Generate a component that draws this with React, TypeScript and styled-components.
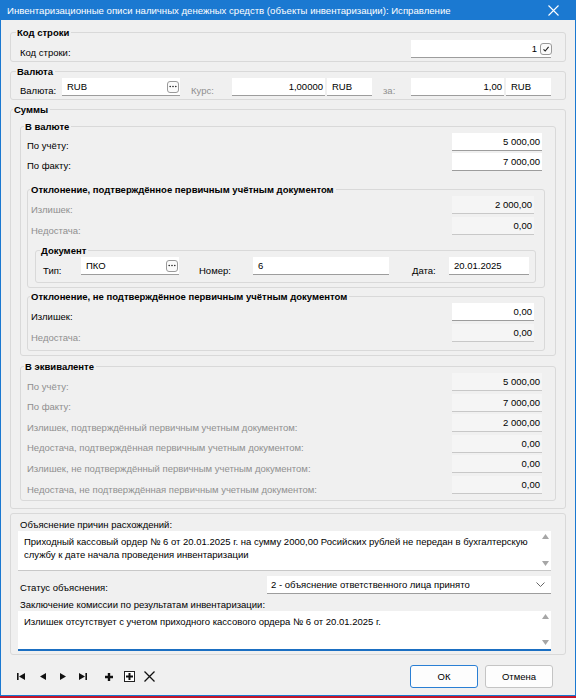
import React from 'react';
import styled, { createGlobalStyle } from 'styled-components';

const Global = createGlobalStyle`
  html, body { margin: 0; padding: 0; background: #ffffff; }
  body { font-family: "Liberation Sans", Arial, sans-serif; font-size: 9.5px; color: #000; }
  * { box-sizing: border-box; }
`;

const Frame = styled.div`
  width: 576px;
  height: 699px;
  display: flex;
  flex-direction: column;
`;

const Window = styled.div`
  width: 576px;
  height: 696px;
  display: flex;
  flex-direction: column;
  background: #f0f0f0;
  border-left: 1px solid #1b79d1;
  border-right: 1px solid #1b79d1;
  border-bottom: 1px solid #1b79d1;
`;

const RedEdge = styled.div`
  height: 2px;
  background: #c4162a;
`;

const TitleBar = styled.div`
  height: 20px;
  flex: none;
  background: #1b79d1;
  color: #fff;
  display: flex;
  align-items: center;
  justify-content: space-between;
  padding: 0 17px 0 7px;
  font-size: 9.6px;
  margin: 0 -1px;
`;

const Content = styled.div`
  padding: 6px 9px 0 9px;
  display: flex;
  flex-direction: column;
`;

const Group = styled.fieldset<{ $mt?: number; $ml?: number }>`
  margin: ${p => p.$mt ?? 0}px 0 0 ${p => p.$ml ?? 0}px;
  padding: 0;
  border: 1px solid #d9d9d9;
  border-radius: 3px;
  min-width: 0;
`;

const GroupBody = styled.div<{ $pad: string }>`
  padding: ${p => p.$pad};
  display: flex;
  flex-direction: column;
`;

const Legend = styled.legend<{ $lm?: number }>`
  font-weight: bold;
  padding: 0 2px 0 1px;
  margin-left: ${p => p.$lm ?? 1}px;
  line-height: 13px;
  font-size: 9.5px;
  color: #000;
`;

const Row = styled.div<{ $h?: number; $pr?: number; $mt?: number }>`
  display: flex;
  align-items: flex-start;
  height: ${p => p.$h ?? 21}px;
  padding-right: ${p => p.$pr ?? 0}px;
  margin-top: ${p => p.$mt ?? 0}px;
  flex: none;
`;

const Label = styled.span<{ $muted?: boolean; $w?: number; $ml?: number; $drop?: number }>`
  color: ${p => (p.$muted ? '#8f8f8f' : '#000')};
  ${p => (p.$w ? `width: ${p.$w}px;` : '')}
  margin-left: ${p => p.$ml ?? 0}px;
  margin-bottom: ${p => -(p.$drop ?? 0)}px;
  flex: none;
  align-self: flex-end;
  line-height: 14px;
  white-space: nowrap;
`;

const Caption = styled.div<{ $mt?: number }>`
  line-height: 13px;
  margin: ${p => p.$mt ?? 0}px 0 0 2px;
  white-space: nowrap;
`;

const Spacer = styled.div`
  flex: 1;
`;

const Field = styled.div<{ $w: number; $disabled?: boolean; $left?: boolean; $ml?: number }>`
  width: ${p => p.$w}px;
  height: 18px;
  flex: none;
  margin-left: ${p => p.$ml ?? 0}px;
  background: ${p => (p.$disabled ? '#f5f5f5' : '#ffffff')};
  border-bottom: 1px solid ${p => (p.$disabled ? '#c8c8c8' : '#9d9d9d')};
  display: flex;
  align-items: center;
  justify-content: ${p => (p.$left ? 'flex-start' : 'flex-end')};
  padding: ${p => (p.$left ? '0 4px 0 5px' : '0 2px 0 4px')};
  gap: 3px;
  line-height: 17px;
  white-space: nowrap;
  color: #000;
`;

const FieldText = styled.span`
  flex: 1;
`;

const MiniButton = styled.span`
  width: 12px;
  height: 12px;
  flex: none;
  border: 1px solid #9a9a9a;
  border-radius: 3px;
  background: #fbfbfb;
  display: flex;
  align-items: center;
  justify-content: center;
  margin-right: -3px;
`;

const TextBox = styled.div<{ $focused?: boolean }>`
  height: 40px;
  margin-right: 5px;
  background: #fff;
  border-bottom: ${p => (p.$focused ? '2px solid #1b6fc2' : '1px solid #c8c8c8')};
  display: flex;
  padding: 4px 0 0 6px;
`;

const TextLines = styled.div`
  flex: 1;
  line-height: 13px;
  overflow: hidden;
`;

const Line = styled.div`
  white-space: nowrap;
`;

const ScrollBar = styled.div`
  width: 12px;
  display: flex;
  flex-direction: column;
  justify-content: space-between;
  align-items: center;
  padding: 1px 0 4px 0;
  margin-top: -2px;
`;

const Select = styled.div`
  width: 284px;
  height: 18px;
  background: #fff;
  border-bottom: 1px solid #9d9d9d;
  display: flex;
  align-items: center;
  padding: 0 6px 0 4px;
  margin-right: 5px;
  justify-content: space-between;
`;

const Toolbar = styled.div`
  flex: 1;
  display: flex;
  align-items: center;
  padding: 4px 22px 0 16px;
`;

const NavIcons = styled.div`
  display: flex;
  align-items: center;
`;

const IconSlot = styled.span<{ $w: number }>`
  width: ${p => p.$w}px;
  display: flex;
  justify-content: flex-start;
  align-items: center;
`;

const Btn = styled.button<{ $primary?: boolean }>`
  width: 68px;
  height: 23px;
  margin-left: 7px;
  border: 1px solid ${p => (p.$primary ? '#2a7fd4' : '#c4c4c4')};
  border-radius: 3px;
  background: #fdfdfd;
  font-family: inherit;
  font-size: 9.5px;
  color: #000;
  padding: 0;
`;

const Dots = () => (
  <MiniButton>
    <svg width="8" height="3" viewBox="0 0 8 3">
      <circle cx="1.2" cy="1.5" r="0.8" fill="#222" />
      <circle cx="4" cy="1.5" r="0.8" fill="#222" />
      <circle cx="6.8" cy="1.5" r="0.8" fill="#222" />
    </svg>
  </MiniButton>
);

const Check = () => (
  <MiniButton>
    <svg width="8" height="8" viewBox="0 0 8 8">
      <path d="M1.5 4.3 L3.2 6 L6.6 1.8" fill="none" stroke="#222" strokeWidth="1.1" />
    </svg>
  </MiniButton>
);

const Up = () => (
  <svg width="7" height="5" viewBox="0 0 7 5"><path d="M0 5 L3.5 0 L7 5 Z" fill="#a6a6a6" /></svg>
);
const Down = () => (
  <svg width="7" height="5" viewBox="0 0 7 5"><path d="M0 0 L3.5 5 L7 0 Z" fill="#a6a6a6" /></svg>
);

const Scroll = () => (
  <ScrollBar>
    <Up />
    <Down />
  </ScrollBar>
);

type R = { label: string; value: string; muted?: boolean; disabled?: boolean };

const ValRow = ({ r, w, pr, h }: { r: R; w: number; pr: number; h?: number }) => (
  <Row $h={h} $pr={pr}>
    <Label $muted={r.muted}>{r.label}</Label>
    <Spacer />
    <Field $w={w} $disabled={r.disabled}>{r.value}</Field>
  </Row>
);

const equiv: R[] = [
  { label: 'По учёту:', value: '5 000,00' },
  { label: 'По факту:', value: '7 000,00' },
  { label: 'Излишек, подтверждённый первичным учетным документом:', value: '2 000,00' },
  { label: 'Недостача, подтверждённая первичным учетным документом:', value: '0,00' },
  { label: 'Излишек, не подтверждённый первичным учетным документом:', value: '0,00' },
  { label: 'Недостача, не подтверждённая первичным учетным документом:', value: '0,00' },
].map(r => ({ ...r, muted: true, disabled: true }));

export default function App() {
  return (
    <>
      <Global />
      <Frame>
        <Window>
          <TitleBar>
            <span>Инвентаризационные описи наличных денежных средств (объекты инвентаризации): Исправление</span>
            <svg width="11" height="11" viewBox="0 0 11 11">
              <path d="M0.5 0.5 L10.5 10.5 M10.5 0.5 L0.5 10.5" stroke="#fff" strokeWidth="1.1" />
            </svg>
          </TitleBar>
          <Content>
            <Group>
              <Legend $lm={5}>Код строки</Legend>
              <GroupBody $pad="1px 14px 3px 9px">
                <Row $h={18}>
                  <Label $drop={2}>Код строки:</Label>
                  <Spacer />
                  <Field $w={140}>
                    <span>1</span>
                    <Check />
                  </Field>
                </Row>
              </GroupBody>
            </Group>

            <Group $mt={3}>
              <Legend $lm={5}>Валюта</Legend>
              <GroupBody $pad="0 14px 3px 9px">
                <Row $h={18}>
                  <Label $w={42} $drop={2}>Валюта:</Label>
                  <Field $w={118} $left>
                    <FieldText>RUB</FieldText>
                    <Dots />
                  </Field>
                  <Label $muted $w={41} $ml={11} $drop={2}>Курс:</Label>
                  <Field $w={93}>1,00000</Field>
                  <Field $w={45} $left $ml={2}>RUB</Field>
                  <Label $muted $w={28} $ml={11} $drop={2}>за:</Label>
                  <Field $w={93}>1,00</Field>
                  <Field $w={45} $left $ml={2}>RUB</Field>
                </Row>
              </GroupBody>
            </Group>

            <Group $mt={3}>
              <Legend $lm={2}>Суммы</Legend>
              <GroupBody $pad="4px 9px 7px 9px">
                <Group>
                  <Legend $lm={3}>В валюте</Legend>
                  <GroupBody $pad="0 10px 4px 6px">
                    <ValRow r={{ label: 'По учёту:', value: '5 000,00' }} w={90} pr={3} h={20} />
                    <ValRow r={{ label: 'По факту:', value: '7 000,00' }} w={90} pr={3} h={20} />

                    <Group $mt={10}>
                      <Legend $lm={2}>Отклонение, подтверждённое первичным учётным документом</Legend>
                      <GroupBody $pad="0 8px 4px 3px">
                        <ValRow r={{ label: 'Излишек:', value: '2 000,00', muted: true, disabled: true }} w={82} pr={2} />
                        <ValRow r={{ label: 'Недостача:', value: '0,00', muted: true, disabled: true }} w={82} pr={2} />
                        <Group $mt={6} $ml={4}>
                          <Legend $lm={4}>Документ</Legend>
                          <GroupBody $pad="0 5px 4px 7px">
                            <Row $h={21}>
                              <Label $w={38}>Тип:</Label>
                              <Field $w={98} $left>
                                <FieldText>ПКО</FieldText>
                                <Dots />
                              </Field>
                              <Label $w={54} $ml={20}>Номер:</Label>
                              <Field $w={136} $left>6</Field>
                              <Label $w={37} $ml={23}>Дата:</Label>
                              <Field $w={80} $left>20.01.2025</Field>
                            </Row>
                          </GroupBody>
                        </Group>
                      </GroupBody>
                    </Group>

                    <Group $mt={2}>
                      <Legend $lm={2}>Отклонение, не подтверждённое первичным учётным документом</Legend>
                      <GroupBody $pad="0 8px 5px 3px">
                        <ValRow r={{ label: 'Излишек:', value: '0,00' }} w={82} pr={2} />
                        <ValRow r={{ label: 'Недостача:', value: '0,00', muted: true, disabled: true }} w={82} pr={2} />
                      </GroupBody>
                    </Group>
                  </GroupBody>
                </Group>

                <Group $mt={4}>
                  <Legend $lm={3}>В эквиваленте</Legend>
                  <GroupBody $pad="0 10px 3px 6px">
                    {equiv.map(r => (
                      <ValRow key={r.label} r={r} w={90} pr={3} h={20.6} />
                    ))}
                  </GroupBody>
                </Group>
              </GroupBody>
            </Group>

            <Group $mt={4}>
              <GroupBody $pad="4px 9px 3px 7px">
                <Caption>Объяснение причин расхождений:</Caption>
                <TextBox>
                  <TextLines>
                    <Line>Приходный кассовый ордер № 6 от 20.01.2025 г. на сумму 2000,00 Росийских рублей не передан в бухгалтерскую</Line>
                    <Line>службу к дате начала проведения инвентаризации</Line>
                  </TextLines>
                  <Scroll />
                </TextBox>
                <Row $h={19} $mt={5}>
                  <Label $ml={2}>Статус объяснения:</Label>
                  <Spacer />
                  <Select>
                    <span>2 - объяснение ответственного лица принято</span>
                    <svg width="9" height="5" viewBox="0 0 9 5">
                      <path d="M0.5 0.5 L4.5 4.5 L8.5 0.5" fill="none" stroke="#666" strokeWidth="1" />
                    </svg>
                  </Select>
                </Row>
                <Caption $mt={3}>Заключение комиссии по результатам инвентаризации:</Caption>
                <TextBox $focused>
                  <TextLines>
                    <Line>Излишек отсутствует с учетом приходного кассового ордера № 6 от 20.01.2025 г.</Line>
                  </TextLines>
                  <Scroll />
                </TextBox>
              </GroupBody>
            </Group>
          </Content>

          <Toolbar>
            <NavIcons>
              <IconSlot $w={23}>
                <svg width="8" height="7" viewBox="0 0 8 7"><path d="M0 0 H1.6 V7 H0 Z M8 0 L2 3.5 L8 7 Z" fill="#111" /></svg>
              </IconSlot>
              <IconSlot $w={20}>
                <svg width="6" height="7" viewBox="0 0 6 7"><path d="M6 0 L0 3.5 L6 7 Z" fill="#111" /></svg>
              </IconSlot>
              <IconSlot $w={19}>
                <svg width="6" height="7" viewBox="0 0 6 7"><path d="M0 0 L6 3.5 L0 7 Z" fill="#111" /></svg>
              </IconSlot>
              <IconSlot $w={26}>
                <svg width="8" height="7" viewBox="0 0 8 7"><path d="M0 0 L6 3.5 L0 7 Z M6.4 0 H8 V7 H6.4 Z" fill="#111" /></svg>
              </IconSlot>
              <IconSlot $w={19}>
                <svg width="8" height="8" viewBox="0 0 8 8"><path d="M2.8 0 H5.2 V2.8 H8 V5.2 H5.2 V8 H2.8 V5.2 H0 V2.8 H2.8 Z" fill="#111" /></svg>
              </IconSlot>
              <IconSlot $w={20}>
                <svg width="11" height="11" viewBox="0 0 11 11">
                  <rect x="0.5" y="0.5" width="10" height="10" fill="#fff" stroke="#222" strokeWidth="1" />
                  <path d="M4.5 2 H6.5 V4.5 H9 V6.5 H6.5 V9 H4.5 V6.5 H2 V4.5 H4.5 Z" fill="#111" />
                </svg>
              </IconSlot>
              <IconSlot $w={14}>
                <svg width="11" height="11" viewBox="0 0 11 11"><path d="M0.5 0.5 L10.5 10.5 M10.5 0.5 L0.5 10.5" stroke="#111" strokeWidth="1.3" /></svg>
              </IconSlot>
            </NavIcons>
            <Spacer />
            <Btn $primary>ОК</Btn>
            <Btn>Отмена</Btn>
          </Toolbar>
        </Window>
        <RedEdge />
      </Frame>
    </>
  );
}
